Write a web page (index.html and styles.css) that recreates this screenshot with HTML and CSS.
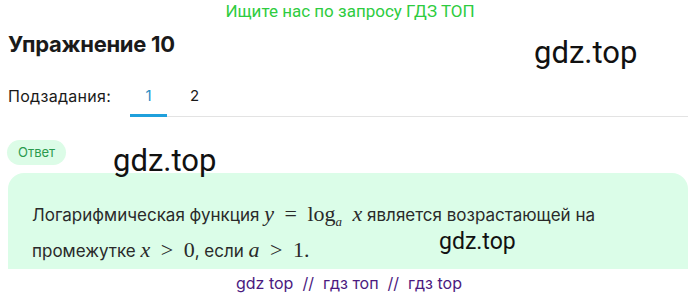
FILE: index.html
```html
<!doctype html>
<html>
  <head>
    <meta charset="UTF-8" />
    <title>Упражнение 10</title>
    <link rel="stylesheet" href="styles.css">
  </head>
  <body>
    <div class="promo">Ищите нас по запросу ГДЗ ТОП</div>

    <h1 class="title">Упражнение 10</h1>

    <div class="subtasks">
      <span class="subtasks-label">Подзадания:</span>
      <div class="tabs">
        <span class="tab active">1</span>
        <span class="tab">2</span>
      </div>
    </div>

    <div class="badge">Ответ</div>

    <div class="answer">
      <p>
        Логарифмическая функция
        <span class="math"><i>y</i> = log<sub><i>a</i></sub> <i>x</i></span>
        является возрастающей на промежутке
        <span class="math"><i>x</i> &gt; 0</span>, если
        <span class="math"><i>a</i> &gt; 1.</span>
      </p>
    </div>

    <div class="footer">gdz top &nbsp;//&nbsp; гдз топ &nbsp;//&nbsp; гдз top</div>

    <!-- watermarks -->
    <span class="mark mark-head">gdz.top</span>
    <span class="mark mark-badge">gdz.top</span>
    <span class="mark mark-box">gdz.top</span>
  </body>
</html>
```

FILE: styles.css
```css
* {
  box-sizing: border-box;
}

body {
  margin: 0;
  padding: 0 12px 0 8px;
  font-family: Inter, "Noto Sans", sans-serif;
  color: #1a1a1a;
  background: #fff;
  position: relative;
  width: 700px;
  height: 297px;
  overflow: hidden;
}

.promo {
  text-align: center;
  color: #2ecc40;
  font-family: Roboto, "Liberation Sans", sans-serif;
  font-size: 17px;
  line-height: 22px;
  padding-left: 4px;
}

.title {
  margin: 6px 0 0;
  font-size: 22px;
  font-weight: 700;
  line-height: 32px;
  letter-spacing: -0.3px;
}

.subtasks {
  display: flex;
  align-items: stretch;
  margin-top: 21px;
  height: 36px;
}

.subtasks-label {
  font-size: 16px;
  letter-spacing: 0.3px;
  line-height: 24px;
  padding-top: 3px;
  width: 122px;
}

.tabs {
  flex: 1;
  display: flex;
  border-bottom: 1px solid #e3e3e3;
}

.tab {
  width: 37px;
  text-align: center;
  font-size: 15px;
  line-height: 24px;
  padding-top: 3px;
  margin-right: 9px;
}

.tab.active {
  color: #2a8fc4;
  border-bottom: 3px solid #1fa0dc;
  margin-bottom: -1px;
}

.badge {
  display: inline-block;
  margin-top: 23px;
  margin-left: -1px;
  padding: 0 11px;
  height: 25px;
  line-height: 25px;
  border-radius: 13px;
  background: #dcfce7;
  color: #2a9a4e;
  font-size: 13px;
}

.answer {
  margin-top: 8px;
  height: 96px;
  background: #dbfde8;
  border-radius: 16px 16px 0 0;
  padding: 24px 24px 0;
  overflow: hidden;
}

.answer p {
  margin: 0;
  font-size: 17px;
  line-height: 36px;
  color: #2a2a2a;
  width: 600px;
}

.math {
  font-family: "Liberation Serif", "DejaVu Serif", serif;
  font-size: 22px;
  line-height: 1;
  word-spacing: 5px;
}

.math sub {
  font-size: 13px;
  line-height: 0;
}

.footer {
  text-align: center;
  color: #4b1a80;
  font-size: 16px;
  line-height: 26px;
  margin-top: 1px;
  padding-left: 2px;
}

.mark {
  position: absolute;
  font-family: Roboto, "Liberation Sans", sans-serif;
  color: #111;
  line-height: 1;
}

.mark-head {
  left: 534px;
  top: 37px;
  font-size: 31px;
}

.mark-badge {
  left: 113px;
  top: 145px;
  font-size: 31px;
}

.mark-box {
  left: 439px;
  top: 230px;
  font-size: 23px;
}
```
